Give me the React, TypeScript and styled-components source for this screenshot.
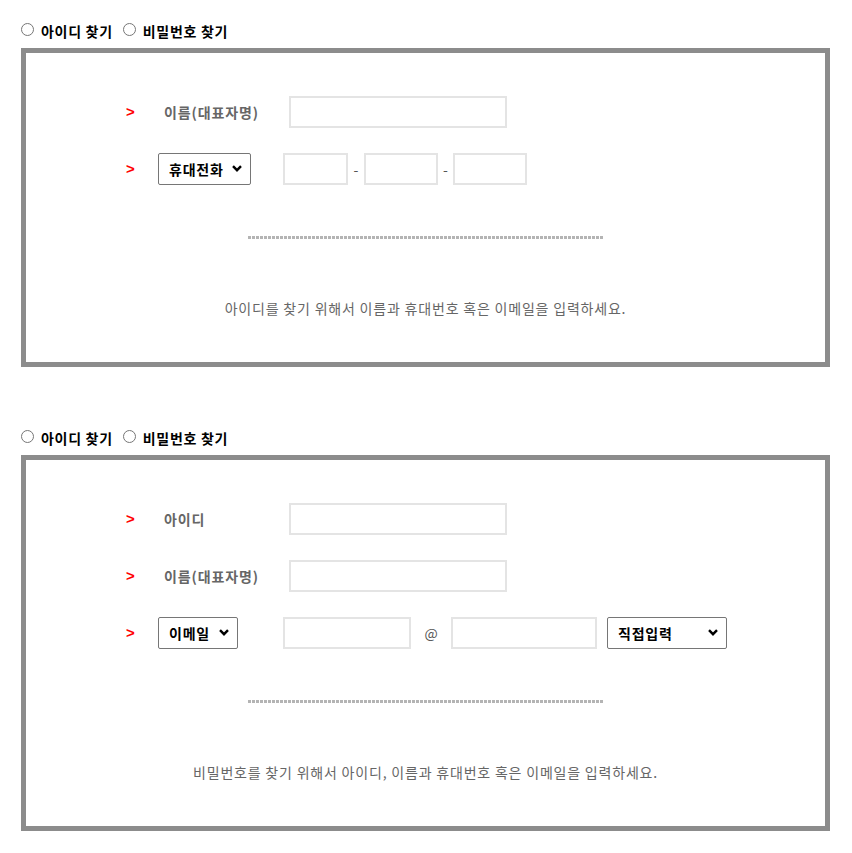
import React from 'react';
import styled, { createGlobalStyle } from 'styled-components';

const GlobalStyle = createGlobalStyle`
  body {
    margin: 0;
    background: #fff;
    font-family: "Noto Sans CJK KR", "Noto Sans", sans-serif;
  }
`;

const chevron =
  "url(\"data:image/svg+xml,%3Csvg xmlns='http://www.w3.org/2000/svg' width='10' height='7' viewBox='0 0 10 7'%3E%3Cpath d='M1 1.2l4 4 4-4' fill='none' stroke='%23000' stroke-width='2.4'/%3E%3C/svg%3E\")";

const Page = styled.div`
  padding: 21px 0 0 21px;
  width: 809px;
`;

const Section = styled.section`
  & + & {
    margin-top: 61px;
  }
`;

const RadioBar = styled.div`
  display: flex;
  align-items: center;
  height: 20px;
  margin-bottom: 7px;
  font-size: 14px;
  font-weight: bold;
  letter-spacing: 0.7px;
  color: #000;
`;

const RadioLabel = styled.label`
  display: inline-flex;
  align-items: center;
  gap: 7px;
  margin-right: 10px;
`;

const Radio = styled.input`
  width: 13px;
  height: 13px;
  margin: -3px 0 0 0;
`;

const Box = styled.div`
  box-sizing: border-box;
  border: 5px solid #8c8c8c;
  padding: 30px 0 44px;
`;

const Row = styled.div`
  display: grid;
  grid-template-columns: 32px 125px auto;
  align-items: center;
  height: 57px;
  padding-left: 100px;
`;

const Marker = styled.span`
  color: #f00;
  font-family: "Liberation Sans", Arial, sans-serif;
  font-size: 15px;
  font-weight: bold;
`;

const Label = styled.span`
  padding-left: 6px;
  color: #666;
  font-size: 14px;
  font-weight: bold;
  letter-spacing: 0.9px;
`;

const Fields = styled.div`
  display: flex;
  align-items: center;
`;

const TextInput = styled.input<{ $w: number; $indent?: number }>`
  box-sizing: border-box;
  width: ${p => p.$w}px;
  height: 32px;
  margin: 0 0 0 ${p => p.$indent || 0}px;
  border: 2px solid #e4e4e4;
  outline: none;
  background: #fff;
`;

const Select = styled.select<{ $w: number; $gap?: number }>`
  box-sizing: border-box;
  appearance: none;
  width: ${p => p.$w}px;
  height: 32px;
  margin-left: ${p => p.$gap || 0}px;
  padding-left: 10px;
  border: 1px solid #767676;
  border-radius: 2px;
  background: #fff ${chevron} no-repeat right 8px center;
  color: #000;
  font-family: inherit;
  font-size: 14px;
  font-weight: bold;
  letter-spacing: 0.8px;
`;

const Sep = styled.span<{ $w: number }>`
  width: ${p => p.$w}px;
  text-align: center;
  color: #555;
  font-size: 14px;
`;

const Divider = styled.div`
  width: 355px;
  height: 3px;
  margin: 39px auto 0;
  background: repeating-linear-gradient(90deg, #b4b4b4 0 3px, transparent 3px 4px);
`;

const Notice = styled.p`
  margin: 59px 0 0;
  line-height: 20px;
  text-align: center;
  color: #666;
  font-size: 14px;
  letter-spacing: 0.8px;
`;

const Choice = ({ name }: { name: string }) => (
  <RadioBar>
    <RadioLabel>
      <Radio type="radio" name={name} />
      아이디 찾기
    </RadioLabel>
    <RadioLabel>
      <Radio type="radio" name={name} />
      비밀번호 찾기
    </RadioLabel>
  </RadioBar>
);

export default function App() {
  return (
    <Page>
      <GlobalStyle />
      <Section>
        <Choice name="find1" />
        <Box>
          <Row>
            <Marker>&gt;</Marker>
            <Label>이름(대표자명)</Label>
            <Fields>
              <TextInput $w={218} $indent={6} />
            </Fields>
          </Row>
          <Row>
            <Marker>&gt;</Marker>
            <div>
              <Select $w={93}>
                <option>휴대전화</option>
              </Select>
            </div>
            <Fields>
              <TextInput $w={65} />
              <Sep $w={16}>-</Sep>
              <TextInput $w={74} />
              <Sep $w={15}>-</Sep>
              <TextInput $w={74} />
            </Fields>
          </Row>
          <Divider />
          <Notice>아이디를 찾기 위해서 이름과 휴대번호 혹은 이메일을 입력하세요.</Notice>
        </Box>
      </Section>
      <Section>
        <Choice name="find2" />
        <Box>
          <Row>
            <Marker>&gt;</Marker>
            <Label>아이디</Label>
            <Fields>
              <TextInput $w={218} $indent={6} />
            </Fields>
          </Row>
          <Row>
            <Marker>&gt;</Marker>
            <Label>이름(대표자명)</Label>
            <Fields>
              <TextInput $w={218} $indent={6} />
            </Fields>
          </Row>
          <Row>
            <Marker>&gt;</Marker>
            <div>
              <Select $w={80}>
                <option>이메일</option>
              </Select>
            </div>
            <Fields>
              <TextInput $w={128} />
              <Sep $w={40}>@</Sep>
              <TextInput $w={146} />
              <Select $w={120} $gap={10}>
                <option>직접입력</option>
              </Select>
            </Fields>
          </Row>
          <Divider />
          <Notice>비밀번호를 찾기 위해서 아이디, 이름과 휴대번호 혹은 이메일을 입력하세요.</Notice>
        </Box>
      </Section>
    </Page>
  );
}
